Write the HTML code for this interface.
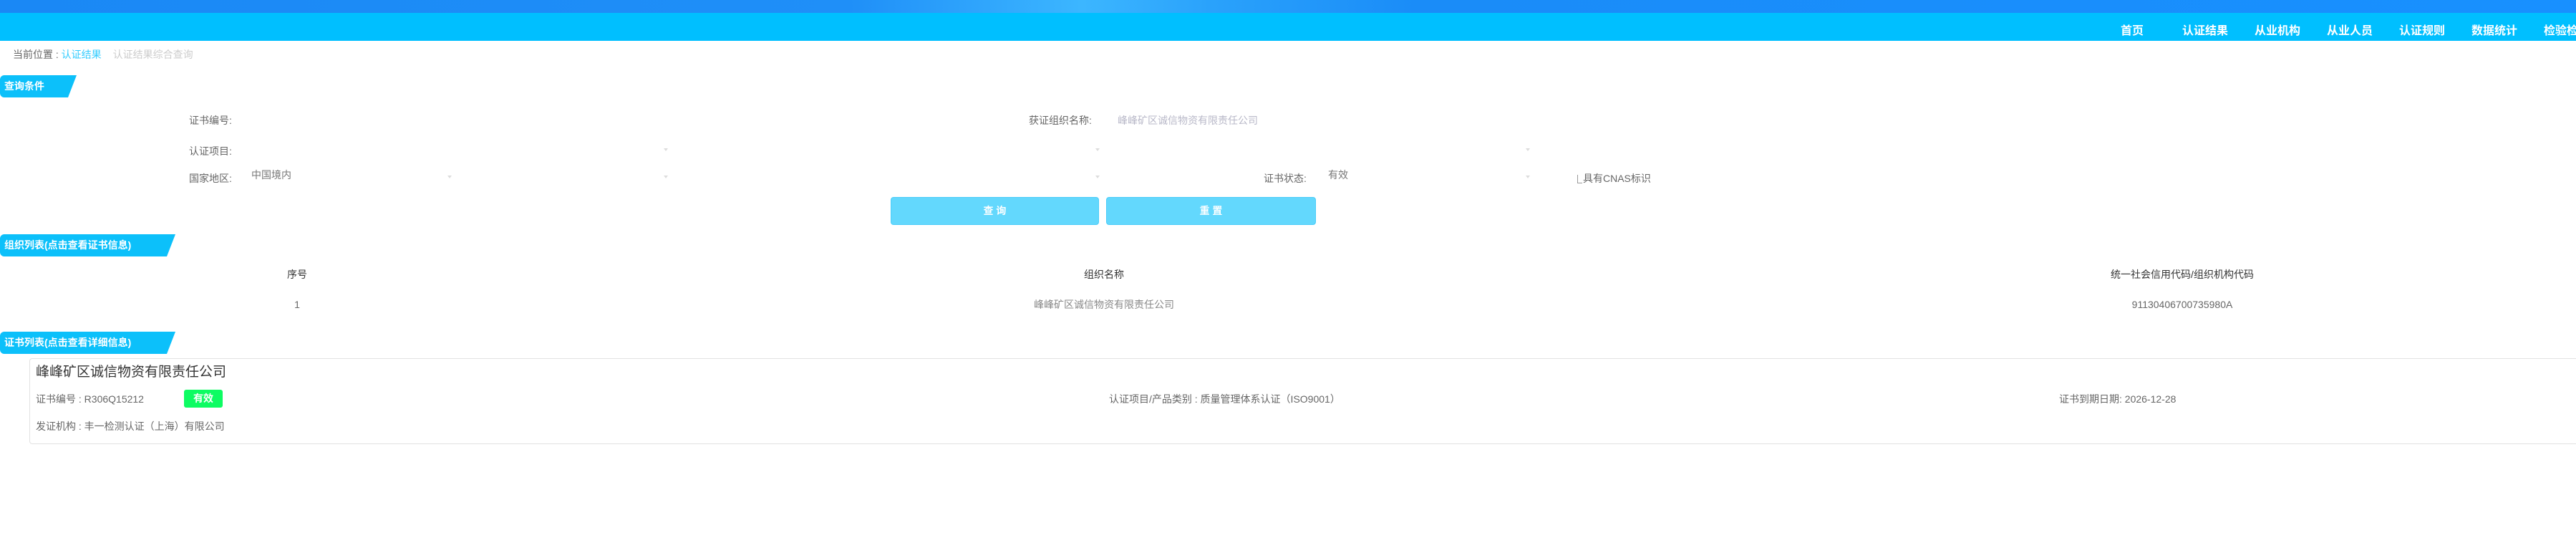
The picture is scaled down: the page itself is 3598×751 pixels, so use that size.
<!DOCTYPE html>
<html><head><meta charset="utf-8"><style>
*{margin:0;padding:0;box-sizing:border-box}
body{width:3598px;height:751px;position:relative;background:#fff;font-family:"Liberation Sans","Noto Sans CJK SC",sans-serif;overflow:hidden;color:#666;font-size:14px}
.a{position:absolute;white-space:nowrap;line-height:1}
.top{position:absolute;left:0;top:0;width:3598px;height:18px;background:linear-gradient(90deg,#1a88f5 0%,#1f8ff8 33%,#3cb6ff 42%,#2aa2fb 47%,#1a8cf8 55%,#1890ff 100%)}
.bar{position:absolute;left:0;top:18px;width:3598px;height:39px;background:#00bfff}
.nav{position:absolute;top:29px;color:#fff;font-weight:bold;font-size:16px;transform:translateX(-50%);white-space:nowrap}
.tab{position:absolute;left:0;height:31px;background:#0cc0fa;color:#fff;font-weight:bold;font-size:14px;line-height:31px;padding-left:6px;clip-path:polygon(0 0,100% 0,calc(100% - 12px) 100%,0 100%);border-radius:6px 0 0 6px}
.btn{position:absolute;top:275px;height:39px;background:#63d8fd;border:1px solid #4ccdf9;border-radius:4px;color:#fff;font-weight:bold;text-align:center;line-height:37px;font-size:14px}
.c{transform:translateX(-50%)}
.arr{position:absolute;width:0;height:0;border-left:3px solid transparent;border-right:3px solid transparent;border-top:4px solid #ddd}
</style></head><body>
<div class="top"></div>
<div class="bar"></div>
<div class="nav" style="left:2978px">首页</div>
<div class="nav" style="left:3080px">认证结果</div>
<div class="nav" style="left:3181px">从业机构</div>
<div class="nav" style="left:3282px">从业人员</div>
<div class="nav" style="left:3383px">认证规则</div>
<div class="nav" style="left:3484px">数据统计</div>
<div class="nav" style="left:3553px;transform:none">检验检测</div>

<div class="a" style="left:18px;top:69px;font-size:14px"><span style="color:#666">当前位置 : </span><span style="color:#33ccff">认证结果</span><span style="color:#ccc;margin-left:16px">认证结果综合查询</span></div>

<div class="tab" style="top:105px;width:107px">查询条件</div>
<div class="a" style="left:264px;top:161px">证书编号:</div>
<div class="a" style="left:1437px;top:161px">获证组织名称:</div>
<div class="a" style="left:1561px;top:161px;color:#b8b8c8">峰峰矿区诚信物资有限责任公司</div>
<div class="a" style="left:264px;top:204px">认证项目:</div>
<div class="a" style="left:264px;top:242px">国家地区:</div>
<div class="a" style="left:351px;top:237px;color:#777">中国境内</div>
<div class="arr" style="left:927px;top:207px"></div>
<div class="arr" style="left:1530px;top:207px"></div>
<div class="arr" style="left:2131px;top:207px"></div>
<div class="arr" style="left:625px;top:245px"></div>
<div class="arr" style="left:927px;top:245px"></div>
<div class="arr" style="left:1530px;top:245px"></div>
<div class="arr" style="left:2131px;top:245px"></div>
<div class="a" style="left:1765px;top:242px">证书状态:</div>
<div class="a" style="left:1855px;top:237px;color:#777">有效</div>
<div class="a" style="left:2203px;top:242px"><span style="display:inline-block;width:7px;height:12px;border-left:1px solid #999;border-bottom:1px solid #999;vertical-align:-2px;margin-right:1px"></span>具有CNAS标识</div>
<div class="btn" style="left:1244px;width:291px">查 询</div>
<div class="btn" style="left:1545px;width:293px">重 置</div>

<div class="tab" style="top:327px;width:245px">组织列表(点击查看证书信息)</div>
<div class="a c" style="left:415px;top:376px;color:#333">序号</div>
<div class="a c" style="left:1542px;top:376px;color:#333">组织名称</div>
<div class="a c" style="left:3048px;top:376px;color:#333">统一社会信用代码/组织机构代码</div>
<div class="a c" style="left:415px;top:418px">1</div>
<div class="a c" style="left:1542px;top:418px;color:#888">峰峰矿区诚信物资有限责任公司</div>
<div class="a c" style="left:3048px;top:418px">91130406700735980A</div>

<div class="tab" style="top:463px;width:245px">证书列表(点击查看详细信息)</div>
<div style="position:absolute;left:41px;top:500px;width:3557px;height:120px;border:1px solid #e2e2e2;border-right:none;border-radius:4px 0 0 4px"></div>
<div class="a" style="left:50px;top:510px;font-size:19px;color:#333">峰峰矿区诚信物资有限责任公司</div>
<div class="a" style="left:50px;top:550px">证书编号 : R306Q15212</div>
<div style="position:absolute;left:257px;top:544px;width:54px;height:25px;background:#0dfc62;border-radius:3px;color:#fff;font-weight:bold;text-align:center;line-height:25px;font-size:14px">有效</div>
<div class="a" style="left:1549px;top:550px">认证项目/产品类别 : 质量管理体系认证（ISO9001）</div>
<div class="a" style="left:2876px;top:550px">证书到期日期: 2026-12-28</div>
<div class="a" style="left:50px;top:588px">发证机构 : 丰一检测认证（上海）有限公司</div>
</body></html>
